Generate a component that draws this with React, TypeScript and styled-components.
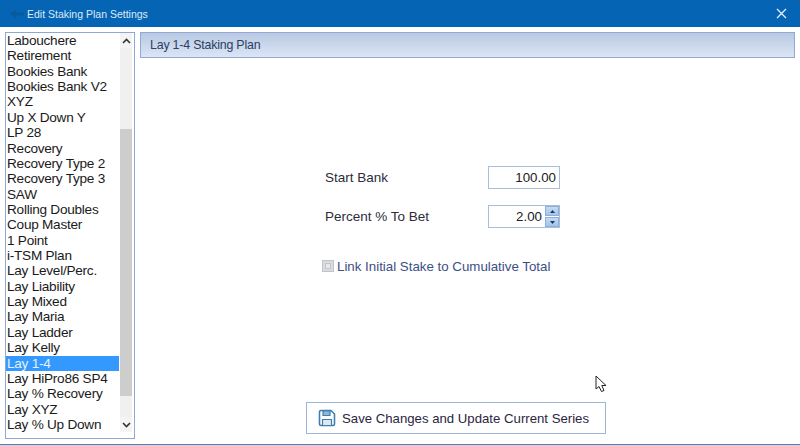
import React from "react";
import styled, { createGlobalStyle } from "styled-components";

const plans = [
  "Labouchere",
  "Retirement",
  "Bookies Bank",
  "Bookies Bank V2",
  "XYZ",
  "Up X Down Y",
  "LP 28",
  "Recovery",
  "Recovery Type 2",
  "Recovery Type 3",
  "SAW",
  "Rolling Doubles",
  "Coup Master",
  "1 Point",
  "i-TSM Plan",
  "Lay Level/Perc.",
  "Lay Liability",
  "Lay Mixed",
  "Lay Maria",
  "Lay Ladder",
  "Lay Kelly",
  "Lay 1-4",
  "Lay HiPro86 SP4",
  "Lay % Recovery",
  "Lay XYZ",
  "Lay % Up Down",
];

const GlobalStyle = createGlobalStyle`
  html, body {
    margin: 0;
    padding: 0;
    background: #fff;
    font-family: "Liberation Sans", Arial, sans-serif;
  }
`;

function App() {
  return (
    <Window>
      <GlobalStyle />
      <TitleBar>
        <TitleIcon width="14" height="10" viewBox="0 0 14 10">
          <path d="M0 5 L6 1 L6 3.5 L14 3.5 L14 6.5 L6 6.5 L6 9 Z" fill="#0b5a9c" />
        </TitleIcon>
        <Title>Edit Staking Plan Settings</Title>
        <CloseIcon width="11" height="11" viewBox="0 0 11 11">
          <path d="M1 1 L10 10 M10 1 L1 10" stroke="#e4f0fa" strokeWidth="1.3" fill="none" />
        </CloseIcon>
      </TitleBar>
      <Body>
        <ListBox>
          <Items>
            {plans.map((plan) => (
              <Item key={plan} $selected={plan === "Lay 1-4"}>
                {plan}
              </Item>
            ))}
          </Items>
          <ScrollBar>
            <ScrollButton>
              <svg width="9" height="6" viewBox="0 0 9 6">
                <path d="M1 5 L4.5 1.5 L8 5" stroke="#333" strokeWidth="1.6" fill="none" />
              </svg>
            </ScrollButton>
            <ScrollGap $size={81} />
            <ScrollThumb />
            <ScrollGap $size={21} />
            <ScrollButton>
              <svg width="9" height="6" viewBox="0 0 9 6">
                <path d="M1 1 L4.5 4.5 L8 1" stroke="#333" strokeWidth="1.6" fill="none" />
              </svg>
            </ScrollButton>
          </ScrollBar>
        </ListBox>
        <Main>
          <Header>Lay 1-4 Staking Plan</Header>
          <Form>
            <FieldRow>
              <FieldLabel>Start Bank</FieldLabel>
              <ValueBox>100.00</ValueBox>
            </FieldRow>
            <FieldRow>
              <FieldLabel>Percent % To Bet</FieldLabel>
              <ValueBox $spin>
                2.00
                <Spinner>
                  <SpinButton>
                    <svg width="5" height="3" viewBox="0 0 5 3">
                      <path d="M0 3 L2.5 0 L5 3 Z" fill="#143a6b" />
                    </svg>
                  </SpinButton>
                  <SpinButton>
                    <svg width="5" height="3" viewBox="0 0 5 3">
                      <path d="M0 0 L2.5 3 L5 0 Z" fill="#143a6b" />
                    </svg>
                  </SpinButton>
                </Spinner>
              </ValueBox>
            </FieldRow>
            <CheckRow>
              <CheckBox>
                <CheckInner />
              </CheckBox>
              <CheckLabel>Link Initial Stake to Cumulative Total</CheckLabel>
            </CheckRow>
          </Form>
          <Footer>
            <SaveButton>
              <svg width="18" height="18" viewBox="0 0 18 18">
                <path
                  d="M1.5 3 Q1.5 1.5 3 1.5 L13 1.5 L16.5 5 L16.5 15 Q16.5 16.5 15 16.5 L3 16.5 Q1.5 16.5 1.5 15 Z"
                  fill="#fff"
                  stroke="#3f7fb0"
                  strokeWidth="1.6"
                />
                <path d="M5 2 L5 6.5 L12 6.5 L12 2 Z" fill="#8fb8d6" stroke="#3f7fb0" strokeWidth="1.2" />
                <path d="M4.5 16 L4.5 10.5 L13.5 10.5 L13.5 16" fill="#dce9f3" stroke="#3f7fb0" strokeWidth="1.2" />
              </svg>
              Save Changes and Update Current Series
            </SaveButton>
          </Footer>
        </Main>
      </Body>
      <Cursor width="14" height="18" viewBox="0 0 14 18">
        <path
          d="M1 1 L1 14 L4 11.5 L6.5 16.5 L9 15.5 L6.8 10.5 L11 10.5 Z"
          fill="#fff"
          stroke="#222"
          strokeWidth="1"
          strokeLinejoin="round"
        />
      </Cursor>
    </Window>
  );
}

const Window = styled.div`
  position: relative;
  width: 800px;
  height: 445px;
  display: flex;
  flex-direction: column;
  background: #fff;
  border-bottom: 1px solid #3f87b8;
  box-sizing: border-box;
  overflow: hidden;
`;

const TitleBar = styled.div`
  height: 27px;
  flex: none;
  display: flex;
  align-items: center;
  padding: 0 13px 0 10px;
  background: #0564b4;
  color: #dcebf7;
`;

const TitleIcon = styled.svg`
  flex: none;
  margin-right: 3px;
`;

const Title = styled.div`
  flex: 1;
  font-size: 10.5px;
`;

const CloseIcon = styled.svg`
  flex: none;
`;

const Body = styled.div`
  flex: 1;
  min-height: 0;
  display: flex;
  gap: 5px;
  padding: 5px;
`;

const ListBox = styled.div`
  width: 130px;
  flex: none;
  box-sizing: border-box;
  display: flex;
  border: 1px solid #8ea9d4;
  background: #fff;
`;

const Items = styled.div`
  flex: 1;
  min-width: 0;
`;

const Item = styled.div<{ $selected?: boolean }>`
  height: 15.36px;
  line-height: 15.36px;
  font-size: 13.6px;
  letter-spacing: -0.25px;
  padding-left: 1px;
  white-space: nowrap;
  color: ${({ $selected }) => ($selected ? "#e6f1fd" : "#1a1a1a")};
  background: ${({ $selected }) => ($selected ? "#3399ff" : "transparent")};
`;

const ScrollBar = styled.div`
  width: 12px;
  flex: none;
  display: flex;
  flex-direction: column;
  margin: 0 2px 6px 1px;
  background: #f0f0f0;
`;

const ScrollButton = styled.div`
  height: 15px;
  flex: none;
  display: flex;
  align-items: center;
  justify-content: center;
  background: #f4f4f4;
`;

const ScrollGap = styled.div<{ $size: number }>`
  height: ${({ $size }) => $size}px;
  flex: none;
`;

const ScrollThumb = styled.div`
  flex: 1;
  background: #cdcdcd;
`;

const Main = styled.div`
  flex: 1;
  min-width: 0;
  display: flex;
  flex-direction: column;
`;

const Header = styled.div`
  height: 26px;
  flex: none;
  box-sizing: border-box;
  display: flex;
  align-items: center;
  padding-left: 9px;
  font-size: 12.4px;
  letter-spacing: -0.2px;
  color: #2a3f66;
  border: 1px solid #93a9d3;
  background: linear-gradient(to bottom, #b9c9e2, #dbe5f5);
`;

const Form = styled.div`
  flex: 1;
  display: flex;
  flex-direction: column;
  padding: 108px 0 0 185px;
`;

const FieldRow = styled.div`
  display: flex;
  align-items: center;
  width: 235px;
  height: 23px;
  margin-bottom: 16px;
`;

const FieldLabel = styled.div`
  width: 163px;
  flex: none;
  font-size: 13.5px;
  color: #2c2c3a;
`;

const ValueBox = styled.div<{ $spin?: boolean }>`
  width: 72px;
  height: 23px;
  flex: none;
  box-sizing: border-box;
  display: flex;
  align-items: center;
  justify-content: flex-end;
  padding-right: ${({ $spin }) => ($spin ? "0" : "3px")};
  gap: 3px;
  font-size: 13.3px;
  color: #222;
  border: 1px solid #a9bedb;
  background: #fff;
`;

const Spinner = styled.div`
  width: 14px;
  height: 21px;
  display: flex;
  flex-direction: column;
  gap: 1px;
`;

const SpinButton = styled.div`
  flex: 1;
  display: flex;
  align-items: center;
  justify-content: center;
  background: linear-gradient(to bottom, #c6daf1, #a3c5ea);
  border: 1px solid #8fafd8;
`;

const CheckRow = styled.div`
  display: flex;
  align-items: center;
  gap: 3px;
  height: 16px;
  margin: 14px 0 0 -3px;
`;

const CheckBox = styled.div`
  width: 12px;
  height: 12px;
  box-sizing: border-box;
  display: flex;
  align-items: center;
  justify-content: center;
  border: 1px solid #c0c4c8;
  background: #d9dde3;
`;

const CheckInner = styled.div`
  width: 6px;
  height: 6px;
  box-sizing: border-box;
  border: 1px solid #c5c5c5;
  background: #e8e8e8;
`;

const CheckLabel = styled.div`
  font-size: 13.3px;
  color: #3a4f86;
`;

const Footer = styled.div`
  display: flex;
  padding: 0 0 5px 166px;
`;

const SaveButton = styled.div`
  width: 300px;
  height: 32px;
  box-sizing: border-box;
  display: flex;
  align-items: center;
  gap: 6px;
  padding-left: 11px;
  font-size: 13.2px;
  color: #2b2540;
  border: 1px solid #9db4d6;
  background: #fff;
`;

const Cursor = styled.svg`
  position: absolute;
  left: 595px;
  top: 375px;
`;

export default App;
